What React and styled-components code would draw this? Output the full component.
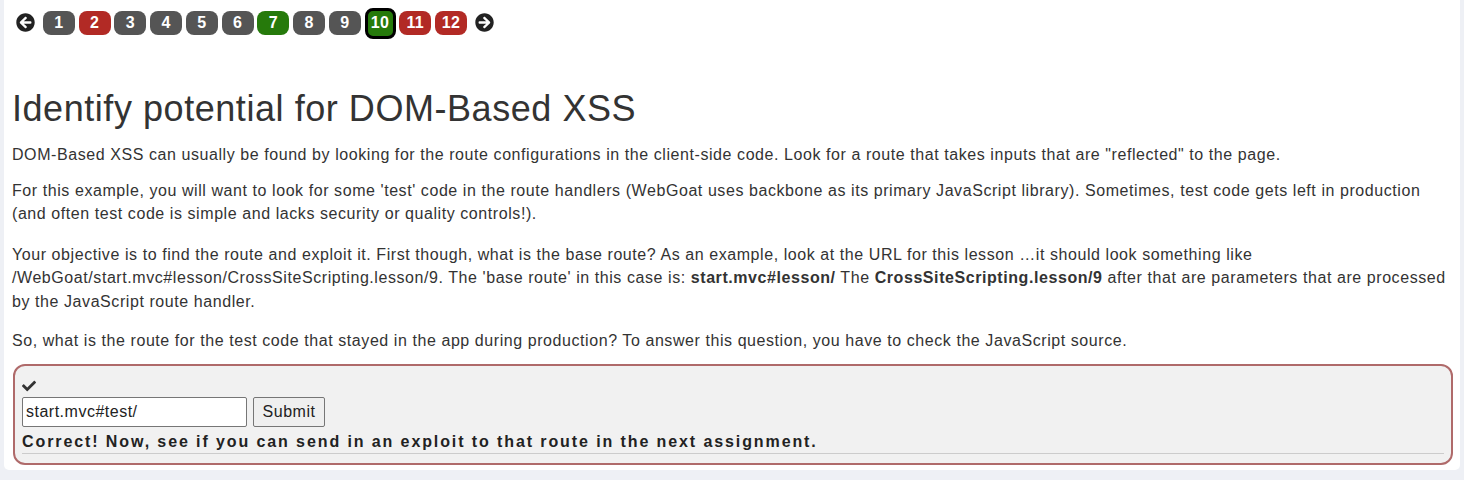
import React from "react";
import styled, { createGlobalStyle } from "styled-components";
import { FaArrowCircleLeft, FaArrowCircleRight, FaCheck } from "react-icons/fa";

const GlobalStyle = createGlobalStyle`
  html, body {
    margin: 0;
    padding: 0;
    background: #eef0f5;
  }
  body {
    font-family: "Liberation Sans", Arial, sans-serif;
    color: #333;
  }
`;

const pages = [
  { n: 1, state: "todo" },
  { n: 2, state: "failed" },
  { n: 3, state: "todo" },
  { n: 4, state: "todo" },
  { n: 5, state: "todo" },
  { n: 6, state: "todo" },
  { n: 7, state: "solved" },
  { n: 8, state: "todo" },
  { n: 9, state: "todo" },
  { n: 10, state: "solved", current: true },
  { n: 11, state: "failed" },
  { n: 12, state: "failed" },
];

const colors = {
  todo: "#555555",
  failed: "#b22a25",
  solved: "#267a0b",
};

const Panel = styled.main`
  margin: 0 4px 0 4px;
  background: #fff;
  border-radius: 0 0 5px 5px;
  padding: 0 8px 6px 8px;
  height: 470px;
  box-sizing: border-box;
`;

const Pager = styled.nav`
  display: flex;
  align-items: center;
  gap: 3.75px;
  padding: 11px 0 0 4px;
  height: 24px;
`;

const Arrow = styled.span`
  display: flex;
  align-items: center;
  color: #222;
  font-size: 19px;
  margin: ${(p) => (p.$left ? "-1px 4px 0 0" : "-1px 0 0 4px")};
`;

const PageButton = styled.span`
  display: flex;
  align-items: center;
  justify-content: center;
  box-sizing: border-box;
  width: ${(p) => (p.$current ? 31 : 32)}px;
  height: ${(p) => (p.$current ? 31 : 24)}px;
  border-radius: 8px;
  background: ${(p) => colors[p.$state]};
  border: ${(p) => (p.$current ? "3px solid #000" : "none")};
  color: #fff;
  font-weight: bold;
  font-size: 16px;
  letter-spacing: 0.3px;
`;

const Title = styled.h1`
  font-size: 36px;
  font-weight: 400;
  letter-spacing: 0.55px;
  margin: 54px 0 14px 0;
  line-height: 40px;
  color: #333;
`;

const Text = styled.p`
  font-size: 16px;
  line-height: 23.5px;
  letter-spacing: 0.57px;
  margin: 0 0 ${(p) => p.$gap || 16}px 0;
`;

const AttackBox = styled.div`
  border: 2px solid #af6a6a;
  border-radius: 12px;
  background: #f1f1f1;
  padding: 12px 7px 9px 7px;
  margin: 0 -1px 0 1px;
`;

const Check = styled.div`
  font-size: 14px;
  color: #333;
  height: 17px;
  display: flex;
  align-items: center;
`;

const Form = styled.form`
  display: flex;
  align-items: center;
  gap: 6px;
  margin: 2px 0 0 0;
`;

const Input = styled.input`
  box-sizing: border-box;
  width: 225px;
  height: 30px;
  border: 1px solid #767676;
  border-radius: 2px;
  background: #fff;
  font-family: "Liberation Sans", Arial, sans-serif;
  font-size: 16px;
  letter-spacing: 0.5px;
  color: #222;
  padding: 0 3px;
`;

const Button = styled.button`
  box-sizing: border-box;
  height: 30px;
  width: 72px;
  padding: 0;
  border: 1px solid #767676;
  border-radius: 2px;
  background: #efefef;
  font-family: "Liberation Sans", Arial, sans-serif;
  font-size: 16px;
  letter-spacing: 0.5px;
  color: #222;
`;

const Feedback = styled.div`
  font-size: 16px;
  font-weight: bold;
  letter-spacing: 1.9px;
  line-height: 22px;
  margin-top: 4px;
  color: #222;
  border-bottom: 1px solid #ccc;
  padding-bottom: 0;
`;

export default function App() {
  return (
    <>
      <GlobalStyle />
      <Panel>
        <Pager>
          <Arrow $left>
            <FaArrowCircleLeft />
          </Arrow>
          {pages.map((p) => (
            <PageButton key={p.n} $state={p.state} $current={p.current}>
              {p.n}
            </PageButton>
          ))}
          <Arrow>
            <FaArrowCircleRight />
          </Arrow>
        </Pager>
        <Title>Identify potential for DOM-Based XSS</Title>
        <Text $gap={12}>
          DOM-Based XSS can usually be found by looking for the route configurations in the client-side code. Look
          for a route that takes inputs that are "reflected" to the page.
        </Text>
        <Text $gap={17}>
          For this example, you will want to look for some 'test' code in the route handlers (WebGoat uses backbone
          as its primary JavaScript library). Sometimes, test code gets left in production (and often test code is
          simple and lacks security or quality controls!).
        </Text>
        <Text>
          Your objective is to find the route and exploit it. First though, what is the base route? As an example,
          look at the URL for this lesson …it should look something like
          /WebGoat/start.mvc#lesson/CrossSiteScripting.lesson/9. The 'base route' in this case is:{" "}
          <b>start.mvc#lesson/</b> The <b>CrossSiteScripting.lesson/9</b> after that are parameters that are
          processed by the JavaScript route handler.
        </Text>
        <Text $gap={11}>
          So, what is the route for the test code that stayed in the app during production? To answer this question,
          you have to check the JavaScript source.
        </Text>
        <AttackBox>
          <Check>
            <FaCheck />
          </Check>
          <Form onSubmit={(e) => e.preventDefault()}>
            <Input defaultValue="start.mvc#test/" />
            <Button type="submit">Submit</Button>
          </Form>
          <Feedback>Correct! Now, see if you can send in an exploit to that route in the next assignment.</Feedback>
        </AttackBox>
      </Panel>
    </>
  );
}
